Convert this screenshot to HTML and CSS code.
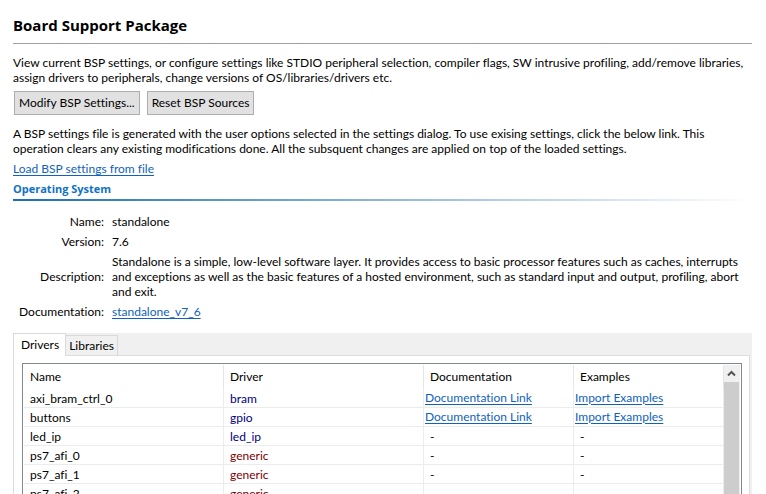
FILE: index.html
```html
<!DOCTYPE html>
<html lang="en">
<head>
<meta charset="utf-8">
<title>Board Support Package</title>
<link rel="stylesheet" href="styles.css">
</head>
<body>
<main class="page">
  <h1 class="title">Board Support Package</h1>
  <p class="text">View current BSP settings, or configure settings like STDIO peripheral selection, compiler flags, SW intrusive profiling, add/remove libraries,<br>assign drivers to peripherals, change versions of OS/libraries/drivers etc.</p>
  <div class="actions">
    <button type="button" class="button">Modify BSP Settings...</button>
    <button type="button" class="button">Reset BSP Sources</button>
  </div>
  <p class="text">A BSP settings file is generated with the user options selected in the settings dialog. To use exising settings, click the below link. This<br>operation clears any existing modifications done. All the subsquent changes are applied on top of the loaded settings.</p>
  <a class="link load" href="#">Load BSP settings from file</a>
  <h2 class="section">Operating System</h2>
  <dl class="details">
    <dt>Name:</dt><dd>standalone</dd>
    <dt>Version:</dt><dd>7.6</dd>
    <dt>Description:</dt><dd>Standalone is a simple, low-level software layer. It provides access to basic processor features such as caches, interrupts<br>and exceptions as well as the basic features of a hosted environment, such as standard input and output, profiling, abort<br>and exit.</dd>
    <dt>Documentation:</dt><dd><a class="link" href="#">standalone_v7_6</a></dd>
  </dl>
  <section class="folder">
    <div class="tabs" role="tablist">
      <button type="button" class="tab active" role="tab" aria-selected="true">Drivers</button>
      <button type="button" class="tab" role="tab" aria-selected="false">Libraries</button>
    </div>
    <div class="panel">
      <div class="viewer">
        <table class="drivers">
          <colgroup><col class="wide"><col class="wide"><col class="narrow"><col class="narrow"></colgroup>
          <thead><tr><th>Name</th><th>Driver</th><th>Documentation</th><th>Examples</th></tr></thead>
          <tbody>
            <tr><td>axi_bram_ctrl_0</td><td class="known">bram</td><td class="linked"><a class="link" href="#">Documentation Link</a></td><td class="linked"><a class="link" href="#">Import Examples</a></td></tr>
            <tr><td>buttons</td><td class="known">gpio</td><td class="linked"><a class="link" href="#">Documentation Link</a></td><td class="linked"><a class="link" href="#">Import Examples</a></td></tr>
            <tr><td>led_ip</td><td class="known">led_ip</td><td>-</td><td>-</td></tr>
            <tr><td>ps7_afi_0</td><td class="generic">generic</td><td>-</td><td>-</td></tr>
            <tr><td>ps7_afi_1</td><td class="generic">generic</td><td>-</td><td>-</td></tr>
            <tr><td>ps7_afi_2</td><td class="generic">generic</td><td></td><td></td></tr>
          </tbody>
        </table>
        <div class="scrollbar">
          <button type="button" class="scroll-up" aria-label="Scroll up"><svg width="9" height="7" viewBox="0 0 9 7"><path d="M1 5.5 4.5 2 8 5.5" fill="none" stroke="#555" stroke-width="2"/></svg></button>
          <div class="thumb"></div>
        </div>
      </div>
    </div>
  </section>
</main>
</body>
</html>
```

FILE: styles.css
```css
* {
  box-sizing: border-box;
}

body {
  margin: 0;
  height: 100vh;
  overflow: hidden;
  background: #fff;
  color: #000;
  font: 12px/15px Lato, "Open Sans", sans-serif;
  font-variant-ligatures: none;
}

button {
  font: inherit;
  font-variant-ligatures: none;
  color: inherit;
}

.page {
  padding: 14px 14px 0 13px;
}

.title {
  margin: 0 0 11px;
  padding-bottom: 6px;
  border-bottom: 1px solid #a0a0a0;
  font-family: "Open Sans", sans-serif;
  font-size: 15px;
  line-height: 23px;
}

.text {
  margin: 0;
  white-space: nowrap;
}

.actions {
  display: flex;
  gap: 7px;
  margin: 6px 1px 11px;
}

.button {
  height: 24px;
  padding: 0 4px 2px;
  border: 1px solid #adadad;
  background: #e1e1e1;
  white-space: nowrap;
}

.link {
  color: #0f62bd;
  text-decoration: underline;
  text-underline-offset: 2px;
}

.load {
  display: block;
  width: max-content;
  margin-top: 5px;
}

.section {
  margin: 5px 0 13px;
  padding-bottom: 3px;
  border-bottom: 2px solid;
  border-image: linear-gradient(to right, #1a6faf, #fff) 1;
  color: #0f72c4;
  font-family: "Open Sans", sans-serif;
  font-size: 11px;
  line-height: 15px;
}

.details {
  display: grid;
  grid-template-columns: 91px 1fr;
  gap: 5px 8px;
  align-items: center;
  margin: 0 0 14px;
  white-space: nowrap;
}

.details dt {
  text-align: right;
}

.details dd {
  margin: 0;
}

.folder {
  background: #f0f0f0;
  padding-right: 2px;
}

.tabs {
  display: flex;
  align-items: flex-end;
  height: 22px;
}

.tab {
  height: 20px;
  padding: 0 3px;
  border: 1px solid #d9d9d9;
  border-width: 1px 1px 0 0;
  background: #f0f0f0;
}

.tab.active {
  height: 23px;
  margin-bottom: -1px;
  padding: 0 6px 2px 7px;
  border-width: 1px 1px 0;
  background: #fff;
  z-index: 1;
}

.panel {
  padding: 7px 7px 0 8px;
  border: 1px solid #dcdcdc;
  background: #fff;
}

.viewer {
  display: flex;
  padding: 1px 1px 0;
  border: 1px solid #828790;
}

.drivers {
  flex: 1;
  table-layout: fixed;
  border-collapse: separate;
  border-spacing: 0;
}

.wide {
  width: 200px;
}

.narrow {
  width: 150px;
}

.drivers th {
  height: 24px;
  padding: 0 6px 2px;
  border-right: 1px solid #e5e5e5;
  font-weight: normal;
  text-align: left;
}

.drivers td {
  height: 19px;
  padding: 1px 6px 0;
  border-right: 1px solid #ececec;
  border-bottom: 1px solid #ececec;
}

.drivers .linked {
  padding: 0 1px 2px;
}

.known {
  color: #000080;
}

.generic {
  color: #800000;
}

.scrollbar {
  display: flex;
  flex-direction: column;
  width: 16px;
  padding-right: 1px;
  background: #f0f0f0;
}

.scroll-up {
  display: grid;
  place-items: center;
  height: 17px;
  padding: 0;
  border: 0;
  background: #f0f0f0;
}

.thumb {
  flex: 1;
  background: #cdcdcd;
}
```
